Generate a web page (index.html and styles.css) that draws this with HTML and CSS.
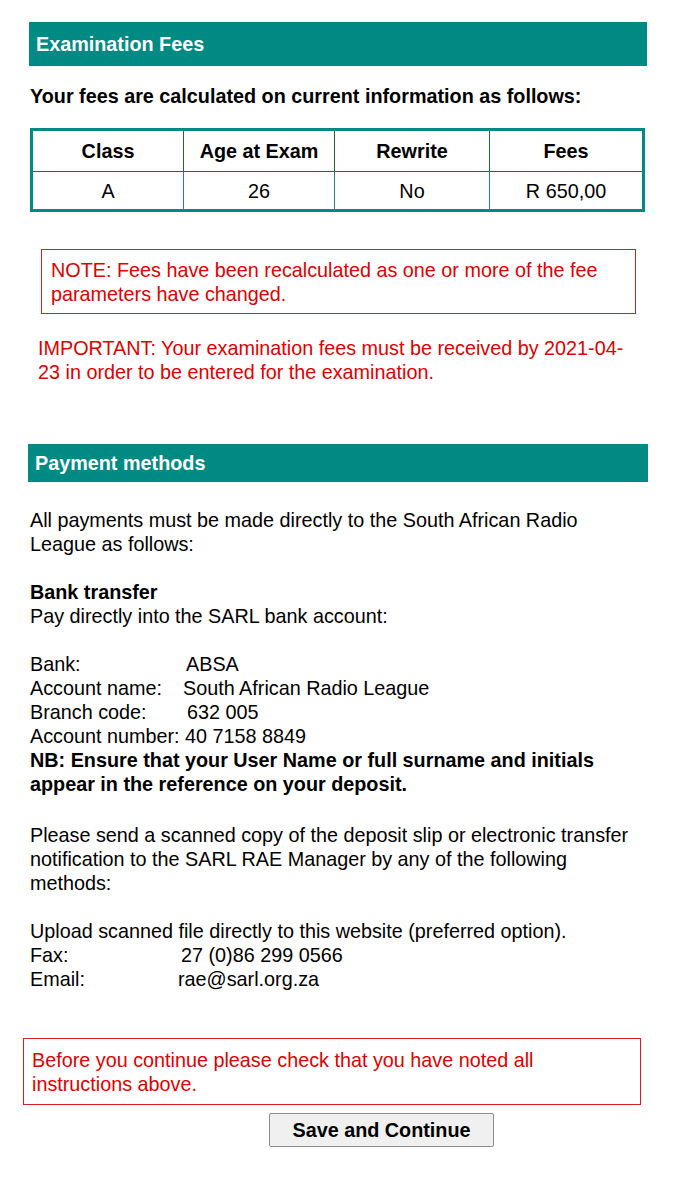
FILE: index.html
```html
<!DOCTYPE html>
<html>
<head>
<meta charset="utf-8">
<title>Examination Fees</title>
<link rel="stylesheet" href="styles.css">
</head>
<body>
<div class="page">
  <h2 class="bar bar-fees">Examination Fees</h2>
  <p class="intro">Your fees are calculated on current information as follows:</p>
  <table class="fees">
    <thead>
      <tr><th class="c1">Class</th><th class="c2">Age at Exam</th><th class="c3">Rewrite</th><th class="c4">Fees</th></tr>
    </thead>
    <tbody>
      <tr><td>A</td><td>26</td><td>No</td><td>R 650,00</td></tr>
    </tbody>
  </table>
  <div class="note">NOTE: Fees have been recalculated as one or more of the fee parameters have changed.</div>
  <p class="important">IMPORTANT: Your examination fees must be received by 2021-04-23 in order to be entered for the examination.</p>

  <h2 class="bar bar-pay">Payment methods</h2>
  <div class="pay">
    <p>All payments must be made directly to the South African Radio League as follows:</p>
    <p><b>Bank transfer</b><br>Pay directly into the SARL bank account:</p>
    <p class="account">
      <span class="lbl l-bank">Bank:</span>ABSA<br>
      <span class="lbl l-name">Account name:</span>South African Radio League<br>
      <span class="lbl l-branch">Branch code:</span>632 005<br>
      Account number: 40 7158 8849<br>
      <b>NB: Ensure that your User Name or full surname and initials appear in the reference on your deposit.</b>
    </p>
    <p>Please send a scanned copy of the deposit slip or electronic transfer notification to the SARL RAE Manager by any of the following methods:</p>
    <p>
      Upload scanned file directly to this website (preferred option).<br>
      <span class="lbl l-fax">Fax:</span>27 (0)86 299 0566<br>
      <span class="lbl l-email">Email:</span>rae@sarl.org.za
    </p>
  </div>
  <div class="warn">Before you continue please check that you have noted all instructions above.</div>
  <div class="actions"><button class="btn" type="button">Save and Continue</button></div>
</div>
</body>
</html>
```

FILE: styles.css
```css
html, body {
  margin: 0;
  padding: 0;
  background: #ffffff;
}
body {
  font-family: "Liberation Sans", Arial, sans-serif;
  font-size: 19.8px;
  line-height: 24px;
  color: #000000;
}
.page {
  width: 700px;
  padding-top: 22px;
  padding-bottom: 30px;
}
.bar {
  background: #008a84;
  color: #ffffff;
  font-size: 19.8px;
  font-weight: bold;
  margin: 0;
}
.bar-fees {
  margin-left: 29px;
  width: 611px;
  height: 44px;
  line-height: 44px;
  padding-left: 7px;
}
.bar-pay {
  margin-left: 28px;
  width: 613px;
  height: 38px;
  line-height: 38px;
  padding-left: 7px;
  margin-top: 60px;
}
.intro {
  font-weight: bold;
  margin: 18px 0 0 30px;
}
.fees {
  margin: 20px 0 0 30px;
  width: 615px;
  border-collapse: collapse;
  border: 3px solid #008a84;
  text-align: center;
}
.fees th {
  font-weight: bold;
  height: 40px;
  padding: 0;
  border: 1px solid #1f6b2a;
}
.fees td {
  height: 37px;
  padding: 0;
  border: 1px solid #1f8a7a;
}
.fees .c1 { width: 150px; }
.fees .c2 { width: 150px; }
.fees .c3 { width: 154px; }
.note {
  margin: 37px 0 0 41px;
  width: 576px;
  border: 1px solid #d02020;
  color: #e00000;
  padding: 8px 8px 7px 9px;
}
.important {
  color: #e00000;
  margin: 22px 0 0 38px;
  width: 595px;
}
.pay {
  margin: 26px 0 0 30px;
  width: 610px;
}
.pay p {
  margin: 0 0 24px 0;
}
.pay p.account {
  margin-bottom: 27px;
}
.pay p:last-child {
  margin-bottom: 0;
}
.lbl {
  display: inline-block;
}
.l-bank { width: 156px; }
.l-name { width: 153px; }
.l-branch { width: 157px; }
.l-fax { width: 151px; }
.l-email { width: 148px; }
.warn {
  margin: 47px 0 0 23px;
  width: 588px;
  border: 1px solid #d02020;
  color: #e00000;
  padding: 9px 20px 8px 8px;
}
.actions {
  margin: 8px 0 0 269px;
}
.btn {
  width: 225px;
  height: 34px;
  font-family: "Liberation Sans", Arial, sans-serif;
  font-size: 19.8px;
  font-weight: bold;
  color: #000000;
  background: #f0f0f0;
  border: 1px solid #8c8c8c;
  border-radius: 2px;
  padding: 0;
}
```
